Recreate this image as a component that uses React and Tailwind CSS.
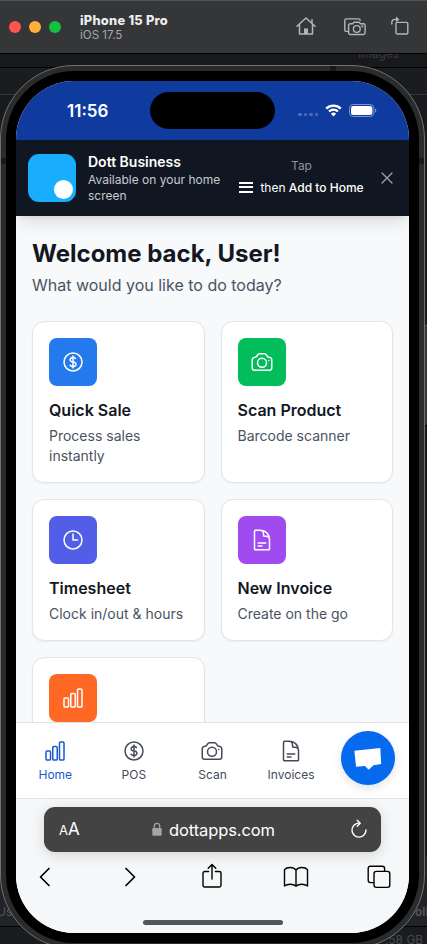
import React from "react";
import {
  HiOutlineCurrencyDollar,
  HiOutlineCamera,
  HiOutlineClock,
  HiOutlineDocumentText,
  HiOutlineChartBar,
  HiOutlineXMark,
} from "react-icons/hi2";

const actions = [
  { title: "Quick Sale", text: "Process sales instantly", color: "bg-[#2479ec]", Icon: HiOutlineCurrencyDollar },
  { title: "Scan Product", text: "Barcode scanner", color: "bg-[#02bd5a]", Icon: HiOutlineCamera },
  { title: "Timesheet", text: "Clock in/out & hours", color: "bg-[#525de8]", Icon: HiOutlineClock },
  { title: "New Invoice", text: "Create on the go", color: "bg-[#9f4bf0]", Icon: HiOutlineDocumentText },
  { color: "bg-[#fe6824]", Icon: HiOutlineChartBar },
];

const tabs = [
  { label: "Home", Icon: HiOutlineChartBar, active: true },
  { label: "POS", Icon: HiOutlineCurrencyDollar },
  { label: "Scan", Icon: HiOutlineCamera },
  { label: "Invoices", Icon: HiOutlineDocumentText },
];

function Desktop() {
  return (
    <div className="absolute inset-0 flex flex-col bg-[#17181a] text-[12px] text-[#55575b]">
      <div className="h-[68px] shrink-0 border-b border-black bg-[#18191b] pt-[45px] pl-[358px] text-[#3a3b3e]">Images</div>
      <div className="h-[27px] shrink-0 border-b border-[#34363a] bg-[#1b1c1f]" />
      <div className="h-[230px] shrink-0 bg-[#191a1d]" />
      <div className="h-[100px] shrink-0 border-t border-[#555] bg-[#343434]" />
      <div className="h-[432px] shrink-0 border-t border-black bg-[#17181a]" />
      <div className="flex h-[70px] shrink-0 justify-between border-b border-black bg-[#222326] pt-[46px]">
        <span className="-ml-[3px]">Us</span>
        <span className="-mr-[9px] font-semibold">olin</span>
      </div>
      <div className="grow bg-[#1a1c20] pt-[4px] pl-[385px] leading-[18px] whitespace-nowrap text-[#46484c]">.58 GB a</div>
    </div>
  );
}

function TitleBar() {
  return (
    <header className="relative flex h-[54px] shrink-0 items-center border-t border-b border-t-[#505154] border-b-black bg-[#353638] pl-[9px] pr-[18px]">
      <div className="flex gap-2">
        <span className="size-3 rounded-full bg-[#ff554f]" />
        <span className="size-3 rounded-full bg-[#ffb03a]" />
        <span className="size-3 rounded-full bg-[#14c13f]" />
      </div>
      <div className="ml-[19px] grow">
        <div className="text-[12.8px] leading-[15px] font-extrabold tracking-[0.25px] text-[#ededee]">iPhone 15 Pro</div>
        <div className="text-[11.6px] leading-[14px] text-[#a5a6a8]">iOS 17.5</div>
      </div>
      <div className="flex items-center gap-[28px] text-[#b4b5b7]">
        <svg className="-mt-[2px]" width="20" height="20" viewBox="0 0 20 20" fill="none" stroke="currentColor" strokeWidth="1.5" strokeLinejoin="round" strokeLinecap="round">
          <path d="M1 10.3 10 2l9 8.3M3.5 8.6V18h13V8.6M16 7V3.8" />
          <path d="M8 18v-5.6h4V18z" fill="currentColor" stroke="none" />
        </svg>
        <svg className="-mt-[1px]" width="22" height="20" viewBox="0 0 22 20" fill="none" stroke="currentColor" strokeWidth="1.4" strokeLinejoin="round" strokeLinecap="round">
          <path d="M3.6 14.4H2.3A1.5 1.5 0 0 1 .8 12.9V3.4a1.5 1.5 0 0 1 1.5-1.5h12.4a1.5 1.5 0 0 1 1.5 1.3" />
          <path d="M6.3 6.8h2.4l1.2-1.6h5.2l1.2 1.6h3.1a1.7 1.7 0 0 1 1.7 1.7v7.3a1.7 1.7 0 0 1-1.7 1.7H6.3a1.7 1.7 0 0 1-1.7-1.7V8.5a1.7 1.7 0 0 1 1.7-1.7z" />
          <circle cx="12.8" cy="12" r="3.4" />
          <circle cx="18.3" cy="9.4" r=".4" />
        </svg>
        <svg width="18" height="20" viewBox="0 0 18 20" fill="none" stroke="currentColor" strokeWidth="1.4" strokeLinejoin="round" strokeLinecap="round" className="-mt-[3px] -ml-[3px]">
          <rect x="5" y="6.4" width="11.8" height="11.6" rx="1.2" />
          <path d="M.8 8V6.8A3.4 3.4 0 0 1 4.2 3.4h2.4" />
          <path d="M5 .6 8.4 3.4 5 6.200z" fill="currentColor" stroke="none" />
        </svg>
      </div>
    </header>
  );
}

function StatusBar() {
  return (
    <div className="flex h-[59px] shrink-0 items-start bg-[#0f3b9f] pt-[11px] text-white">
      <div className="w-[134px] pt-[7px] pl-[51px] text-[17px] leading-6 font-semibold">11:56</div>
      <div className="h-[37px] w-[125px] rounded-full bg-black" />
      <div className="flex h-[37px] items-center pl-[23px]">
        <div className="mt-[8px] flex gap-[2px]">
          <span className="size-[3.5px] rounded-full bg-[#4d6cb8]" />
          <span className="size-[3.5px] rounded-full bg-[#4d6cb8]" />
          <span className="size-[3.5px] rounded-full bg-[#4d6cb8]" />
          <span className="size-[3.5px] rounded-full bg-[#4d6cb8]" />
        </div>
        <svg className="ml-[7px]" width="17" height="13" viewBox="0 0 17 13" fill="none" stroke="white" strokeWidth="2.2">
          <path d="M1.2 4.6a10.4 10.4 0 0 1 14.6 0" />
          <path d="M4 7.5a6.4 6.4 0 0 1 9 0" />
          <path d="M8.5 12.5 5.9 9.8a3.8 3.8 0 0 1 5.2 0z" fill="white" stroke="none" />
        </svg>
        <svg className="ml-[7px]" width="28" height="13" viewBox="0 0 28 13">
          <rect x=".5" y=".5" width="24.4" height="12" rx="3.8" fill="none" stroke="#8094cb" />
          <rect x="2" y="2" width="21.4" height="9" rx="2.5" fill="white" />
          <path d="M26 4.5v4c.8-.3 1.3-1.1 1.3-2s-.5-1.7-1.3-2z" fill="#8094cb" />
        </svg>
      </div>
    </div>
  );
}

function InstallBanner() {
  return (
    <div className="relative z-10 flex h-[76px] shrink-0 items-center bg-[#111722] pr-[14px] pl-3 text-white shadow-lg">
      <div className="flex size-12 shrink-0 items-end justify-end rounded-[11px] bg-[#18aefd] p-[3px]">
        <span className="size-[19px] rounded-full bg-white" />
      </div>
      <div className="ml-3 w-[150px] shrink-0">
        <div className="text-sm leading-5 font-semibold">Dott Business</div>
        <div className="text-xs text-[#c6cad1]">Available on your home<br />screen</div>
      </div>
      <div className="-mt-[2px] flex w-[127px] shrink-0 flex-col items-center whitespace-nowrap">
        <div className="text-xs leading-4 text-[#8c929d]">Tap</div>
        <div className="mt-[6px] flex items-center text-xs leading-4">
          <span className="-mt-[2px] mr-[7px] flex h-[11px] w-[14px] flex-col">
            <span className="h-[2px] bg-white" />
            <span className="mt-[2px] h-[2px] bg-white" />
            <span className="mt-auto h-[2px] bg-white" />
          </span>
          <span>then <span className="font-medium">Add to Home</span></span>
        </div>
      </div>
      <HiOutlineXMark className="ml-auto -mr-[2px] size-5 shrink-0 text-[#9ca1ab]" />
    </div>
  );
}

function ActionCard({ title, text, color, Icon }) {
  return (
    <div className="min-h-[142px] rounded-xl border border-[#e2e4e8] bg-white p-4 shadow-xs">
      <div className={`mb-3 flex size-12 items-center justify-center rounded-lg text-white ${color}`}>
        <Icon className="size-6" />
      </div>
      {title && <h2 className="text-base leading-6 font-semibold text-[#14171f]">{title}</h2>}
      {text && <p className="mt-1 text-sm leading-5 text-[#4a5361]">{text}</p>}
    </div>
  );
}

function TabBar() {
  return (
    <nav className="relative flex h-[77px] shrink-0 border-t border-b border-[#e1e3e6] bg-white">
      {tabs.map(({ label, Icon, active }) => (
        <div key={label} className={`flex w-1/5 flex-col items-center pt-4 ${active ? "text-[#1859d0]" : "text-[#444b57]"}`}>
          <Icon className="size-6" />
          <span className="mt-1 text-xs leading-4">{label}</span>
        </div>
      ))}
      <div className="flex grow justify-end pt-2 pr-[14px]">
        <div className="flex size-[54px] items-center justify-center rounded-full bg-[#066aef] shadow-[0_3px_10px_rgba(0,0,0,0.12)]">
          <svg width="28" height="24" viewBox="0 0 28 24" fill="white">
            <path d="M.4 4.7 26.3 2l.9 16-7.7 1.3-4.8 4.4L11 20l-9 .7z" />
          </svg>
        </div>
      </div>
    </nav>
  );
}

function BrowserBar() {
  return (
    <footer className="flex grow flex-col bg-[#f6f7f8] pt-2 text-black">
      <div className="mx-7 flex h-[45px] shrink-0 items-center justify-between rounded-[11px] bg-[#434344] pr-[13px] pl-[15px] text-white shadow-[0_3px_14px_rgba(0,0,0,0.14)]">
        <div className="w-[34px] text-[17px] leading-5"><span className="text-[13px]">A</span>A</div>
        <div className="flex items-center gap-[7px]">
          <svg width="10" height="15" viewBox="0 0 10 15">
            <path d="M2.3 7V4a2.7 2.7 0 0 1 5.4 0v3" fill="none" stroke="#a4a4a9" strokeWidth="1.3" />
            <rect x=".3" y="6" width="9.4" height="7.8" rx="1.3" fill="#a4a4a9" />
          </svg>
          <span className="text-[16.5px] leading-6 tracking-[-0.1px]">dottapps.com</span>
        </div>
        <div className="flex w-[34px] justify-end">
          <svg className="-mt-[2px]" width="18" height="20" viewBox="0 0 18 20" fill="none" stroke="white" strokeWidth="1.4" strokeLinecap="round" strokeLinejoin="round">
            <path d="M9.3 4.1A7 7 0 1 0 16 11" />
            <path d="M7.2 1.2 10.2 4.2 7.2 7.3" />
          </svg>
        </div>
      </div>
      <div className="mt-[11px] flex h-7 items-center pl-[23px]">
        <svg width="12" height="20" viewBox="0 0 12 20" fill="none" stroke="currentColor" strokeWidth="1.7" strokeLinecap="round" strokeLinejoin="round"><path d="M10 1.5 1.5 10 10 18.5" /></svg>
        <svg className="ml-[73px]" width="12" height="20" viewBox="0 0 12 20" fill="none" stroke="currentColor" strokeWidth="1.7" strokeLinecap="round" strokeLinejoin="round"><path d="M2 1.5 10.5 10 2 18.5" /></svg>
        <svg className="-mt-[2px] ml-[66px]" width="20" height="26" viewBox="0 0 20 26" fill="none" stroke="currentColor" strokeWidth="1.4" strokeLinecap="round" strokeLinejoin="round">
          <path d="M6.6 8.5H2.7A1.7 1.7 0 0 0 1 10.2v12.1A1.7 1.7 0 0 0 2.7 24h14.6a1.7 1.7 0 0 0 1.7-1.7V10.2a1.7 1.7 0 0 0-1.7-1.7h-3.9" />
          <path d="M10 16V1.6M6.2 5.2 10 1.4 13.8 5.2" />
        </svg>
        <svg className="ml-[61px]" width="26" height="22" viewBox="0 0 26 22" fill="none" stroke="currentColor" strokeWidth="1.4" strokeLinecap="round" strokeLinejoin="round">
          <path d="M13 4.2C11.8 2.4 9.6 1.5 7.2 1.5S2.6 2.2 1.5 3.6V20c1.4-1.2 3.4-1.7 5.7-1.7s4.500.5 5.8 1.9c1.3-1.4 3.5-1.9 5.8-1.9s4.300.5 5.7 1.7V3.6c-1.1-1.4-3.3-2.1-5.7-2.1S14.2 2.4 13 4.2v16" />
        </svg>
        <svg className="ml-[58px]" width="24" height="24" viewBox="0 0 24 24" fill="none" stroke="currentColor" strokeWidth="1.4" strokeLinejoin="round">
          <path d="M7 17.6H3.5A2.3 2.3 0 0 1 1.2 15.3V3.5A2.3 2.3 0 0 1 3.5 1.2h11.8a2.3 2.3 0 0 1 2.3 2.3v2.9" />
          <rect x="7" y="6.4" width="15.8" height="16" rx="2.3" />
        </svg>
      </div>
      <div className="mx-auto mt-[29px] h-[5px] w-[140px] rounded-full bg-[#555657]" />
    </footer>
  );
}

export default function App() {
  return (
    <div className="relative flex h-[944px] w-[427px] flex-col overflow-hidden font-['Inter','Liberation_Sans',sans-serif]">
      <Desktop />
      <TitleBar />
      <div className="relative mt-[11px] h-[884px] w-[425px] shrink-0 rounded-[74px] border border-[#707173] bg-[#2a2b2b] p-[5px]">
        <span className="absolute top-0 left-[329px] h-[5px] w-[6px] bg-[#18191a]" />
        <span className="absolute top-[92px] left-0 h-[6px] w-[5px] bg-[#18191a]" />
        <span className="absolute top-[92px] right-0 h-[6px] w-[5px] bg-[#18191a]" />
        <div className="h-full rounded-[68px] bg-black p-[10px]">
          <div className="flex h-[852px] w-[393px] flex-col overflow-hidden rounded-[58px] bg-[#f7f9fb]">
            <StatusBar />
            <InstallBanner />
            <main className="h-[506px] shrink-0 overflow-hidden px-4 pt-[22px]">
              <h1 className="text-2xl leading-8 font-bold text-[#14171f]">Welcome back, User!</h1>
              <p className="mt-[3px] text-base leading-6 text-[#4a5361]">What would you like to do today?</p>
              <div className="mt-6 grid grid-cols-2 gap-4">
                {actions.map((action) => (
                  <ActionCard key={action.color} {...action} />
                ))}
              </div>
            </main>
            <TabBar />
            <BrowserBar />
          </div>
        </div>
      </div>
    </div>
  );
}
